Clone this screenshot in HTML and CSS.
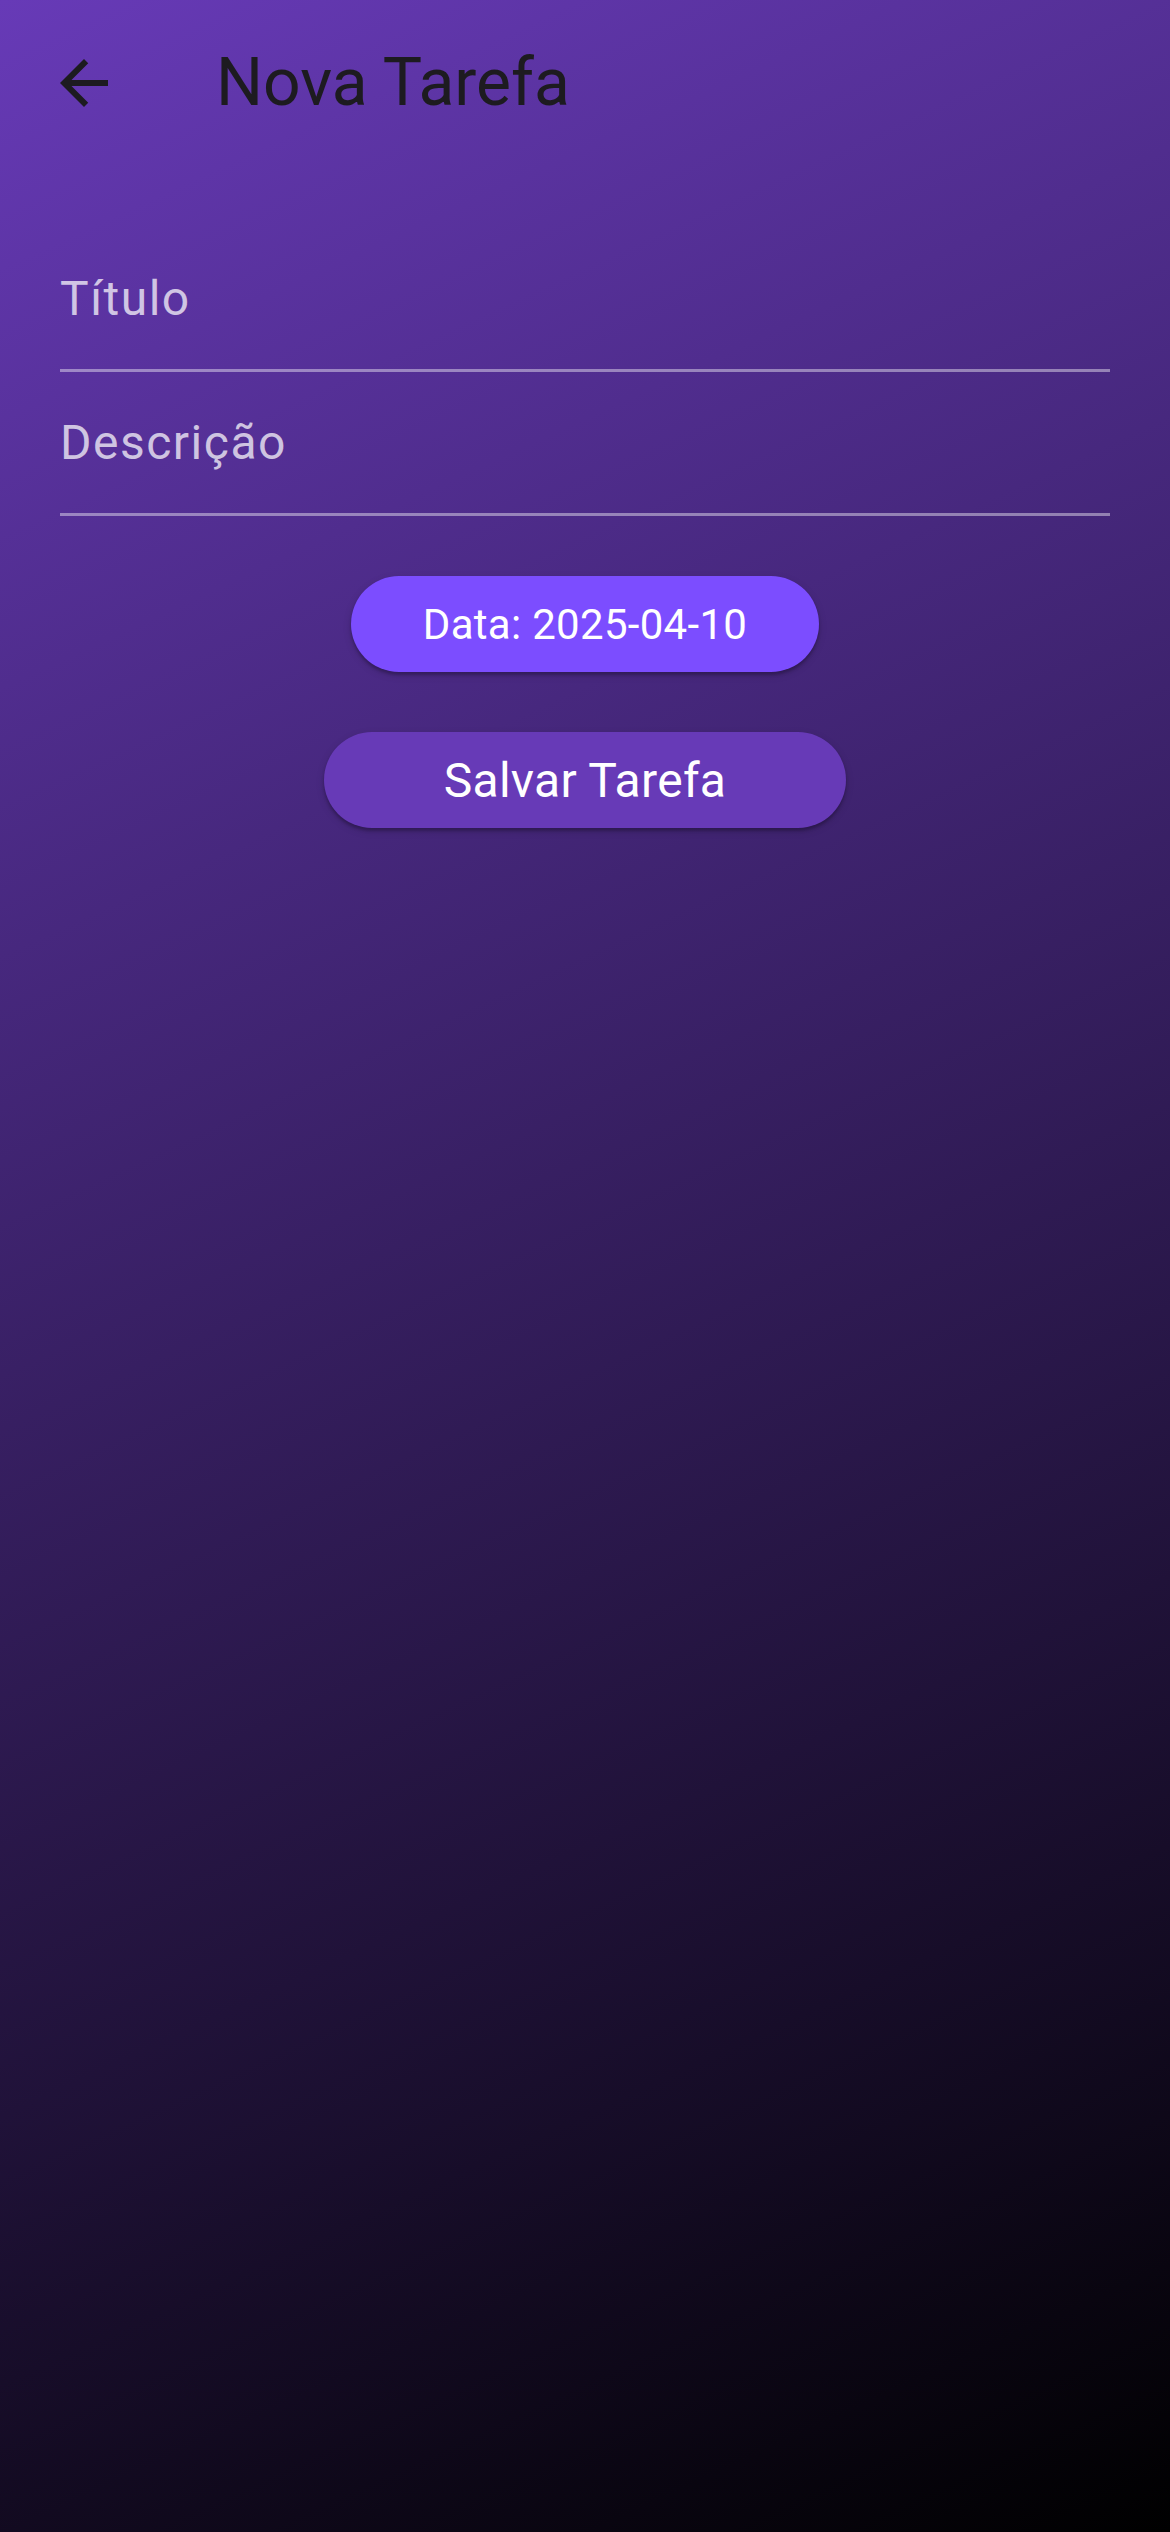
FILE: index.html
```html
<!DOCTYPE html>
<html lang="pt">
<head>
<meta charset="utf-8">
<title>Nova Tarefa</title>
<link rel="stylesheet" href="styles.css">
</head>
<body>
<div class="screen">
  <header class="appbar">
    <div class="leading">
      <svg class="back-icon" viewBox="0 0 24 24" aria-hidden="true">
        <path d="M20 11H7.83l5.59-5.59L12 4l-8 8 8 8 1.41-1.41L7.83 13H20v-2z"/>
      </svg>
    </div>
    <h1 class="title">Nova Tarefa</h1>
  </header>
  <main class="form">
    <div class="field"><span class="field-label">Título</span></div>
    <div class="field"><span class="field-label">Descrição</span></div>
    <div class="actions">
      <button class="btn btn-date">Data: 2025-04-10</button>
      <button class="btn btn-save">Salvar Tarefa</button>
    </div>
  </main>
</div>
</body>
</html>
```
FILE: styles.css
```css
html, body {
  margin: 0;
  padding: 0;
}
body {
  min-height: 100vh;
  background: linear-gradient(155.2deg, #673AB7 0%, #000000 100%);
  font-family: Roboto, "Noto Sans", "Liberation Sans", sans-serif;
}
.screen {
  min-height: 100vh;
  display: flex;
  flex-direction: column;
}
.appbar {
  height: 168px;
  display: flex;
  align-items: center;
  padding-bottom: 3px;
  box-sizing: border-box;
}
.leading {
  width: 168px;
  height: 168px;
  display: flex;
  align-items: center;
  justify-content: center;
  flex-shrink: 0;
}
.back-icon {
  width: 72px;
  height: 72px;
  fill: #1D1B20;
}
.title {
  margin: 0 0 0 48px;
  font-size: 66px;
  font-weight: 400;
  color: #1D1B20;
  line-height: normal;
}
.form {
  padding: 60px;
  display: flex;
  flex-direction: column;
}
.field {
  height: 144px;
  box-sizing: border-box;
  border-bottom: 3px solid rgba(255, 255, 255, 0.42);
  padding-top: 43px;
}
.field-label {
  display: block;
  font-size: 48px;
  line-height: 56px;
  letter-spacing: 1.5px;
  color: rgba(255, 255, 255, 0.72);
}
.actions {
  margin-top: 60px;
  display: flex;
  flex-direction: column;
  align-items: center;
  gap: 60px;
}
.btn {
  border: none;
  border-radius: 999px;
  height: 96px;
  color: #ffffff;
  font-family: Roboto, "Noto Sans", "Liberation Sans", sans-serif;
  font-weight: 400;
  display: flex;
  align-items: center;
  justify-content: center;
  box-shadow: 0 3px 3px rgba(0, 0, 0, 0.22), 0 3px 9px rgba(0, 0, 0, 0.14);
}
.btn-date {
  background: #7C4DFF;
  font-size: 42px;
  letter-spacing: 0.3px;
  padding: 0 72px;
}
.btn-save {
  background: #673AB7;
  font-size: 48px;
  letter-spacing: 0.3px;
  padding: 0 120px;
}
```
